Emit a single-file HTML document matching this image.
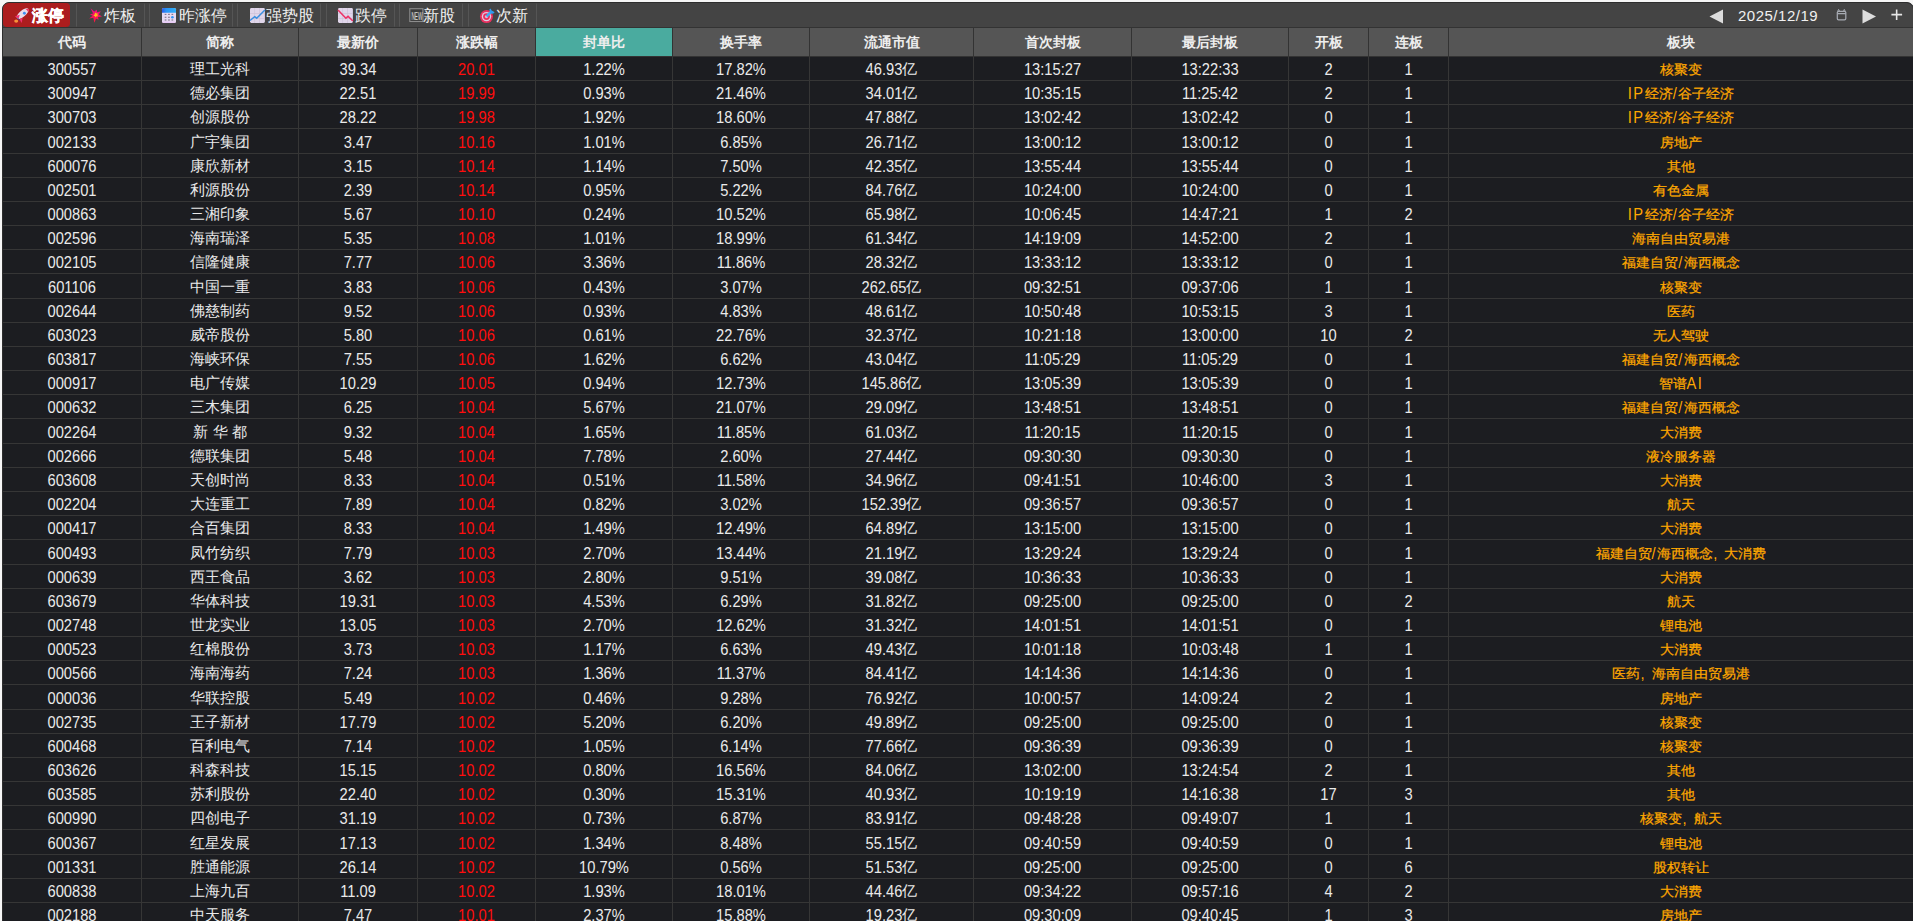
<!DOCTYPE html><html><head><meta charset="utf-8"><style>
*{box-sizing:border-box}
html,body{margin:0;padding:0;width:1913px;height:921px;overflow:hidden;background:#f6f6f6;font-family:"Liberation Sans",sans-serif}
#win{position:absolute;left:2px;top:2px;width:1912px;height:940px;border:1px solid #2e2e2e;border-radius:7px;background:#1c1d21;overflow:hidden}
#tb{position:absolute;left:0;top:0;width:1911px;height:25px;background:#444;border-bottom:1px solid #333}
.tab{position:absolute;top:0;height:24px;border-left:1px solid #555;border-right:1px solid #555;border-radius:1.5px;color:#f2f2f2;font-size:15px;line-height:24px;white-space:nowrap}
.tab.on{background:#ac1d1e;border-color:#ac1d1e;border-radius:4px;font-weight:bold;color:#fff}
.tab svg{position:absolute}
.tab .t{position:absolute;top:0}
#hd{position:absolute;left:0;top:25px;width:1911px;height:29px;background:#555;border-bottom:1px solid #333}
.h{position:absolute;top:0;height:28px;line-height:28px;text-align:center;color:#eee;font-weight:bold;font-size:14px}
.hv{position:absolute;top:25px;width:1px;height:29px;background:#333}
.dv{position:absolute;top:54px;width:1px;height:900px;background:#363636}
.dh{position:absolute;left:0;width:1911px;height:1px;background:#363636}
.r{position:absolute;left:0;width:1911px}
.d{position:absolute;top:0;text-align:center;color:#eaeaea;font-size:14.7px;white-space:nowrap}
.c{display:inline-block;white-space:pre;font-size:14.5px;transform:translateY(1px)}
.n{display:inline-block;white-space:pre;transform:translateY(1px) scaleY(1.08);transform-origin:50% 30%}
.red{color:#ff0d0d}
.org{color:#ffa800}
.org .n{letter-spacing:1.5px}
.org .c{font-size:14.25px;transform:translateY(1.5px) scaleY(0.93);-webkit-text-stroke:0.25px #ffa800}
#nav{position:absolute;top:0;height:24px;color:#eee}
</style></head><body><div id="win">
<div id="tb">
<div class="tab on" style="left:0px;width:67px"></div>
<div class="tab" style="left:73px;width:69px"></div>
<div class="tab" style="left:146px;width:84px"></div>
<div class="tab" style="left:234px;width:84px"></div>
<div class="tab" style="left:323px;width:69px"></div>
<div class="tab" style="left:396px;width:64px"></div>
<div class="tab" style="left:465px;width:69px"></div>
<div style="position:absolute;left:7px;top:2px;width:22px;height:21px"><svg width="22" height="21" viewBox="0 0 22 21"><ellipse cx="12.6" cy="8.6" rx="7.4" ry="3.1" transform="rotate(-40 12.6 8.6)" fill="#e9dbe9"/><path d="M15.6 3.9 L19 4 L18.4 7.5 C17.6 6 16.9 4.9 15.6 3.9Z" fill="#f23262"/><circle cx="14.4" cy="8.2" r="1.45" fill="#3f8ef2"/><path d="M4.8 11.3 L9.8 9.8 L8.6 13.6Z" fill="#f2306e"/><path d="M9.6 14.4 L12.6 12.6 L11.7 17.9Z" fill="#f2306e"/><path d="M7.6 12.4 L10.4 15.2 L9.6 15.8 L7 13.2Z" fill="#5a3a8a"/><ellipse cx="6.2" cy="16.1" rx="2" ry="1.7" fill="#f7923a"/></svg></div>
<div style="position:absolute;left:29px;top:1px;height:24px;line-height:24px;font-size:16px;color:#fff;font-weight:bold;-webkit-text-stroke:0.35px #fff">涨停</div>
<div style="position:absolute;left:83px;top:2px;width:22px;height:21px"><svg width="20" height="21" viewBox="0 0 20 21"><defs><linearGradient id="bg1" x1="0" y1="0" x2="0" y2="1"><stop offset="0" stop-color="#ee0a8c"/><stop offset="1" stop-color="#ff1a3c"/></linearGradient></defs><path d="M4.6 3.2 L8.2 6.6 L10.7 4.8 L11.2 7.3 L14.8 6.2 L12.8 9.6 L16 11.4 L11.9 12.3 L12.8 14.8 L10 13.7 L8.4 17.8 L7.3 12.8 L3.2 13.5 L6.6 10.7 L3.9 9.35 L7.1 8.4Z" fill="url(#bg1)"/><path d="M9.2 7.4 L10.6 8.6 L12 8.4 L11.3 10 L12.2 11.2 L10.5 11.3 L9.6 12.6 L8.9 11.2 L7.4 10.8 L8.5 9.6Z" fill="#ffbb1a"/></svg></div>
<div style="position:absolute;left:101px;top:1px;height:24px;line-height:24px;font-size:16px;color:#f0f0f0;">炸板</div>
<div style="position:absolute;left:155px;top:2px;width:22px;height:21px"><svg width="22" height="21" viewBox="0 0 22 21"><defs><linearGradient id="cg" x1="0" y1="0" x2="1" y2="0"><stop offset="0" stop-color="#2a5ae8"/><stop offset="0.3" stop-color="#2a94f5"/><stop offset="1" stop-color="#30b0f8"/></linearGradient></defs><rect x="4" y="3" width="14" height="15" rx="1.6" fill="#e6daf2"/><path d="M4 7.8 V4.6 a1.6 1.6 0 0 1 1.6 -1.6 h10.8 a1.6 1.6 0 0 1 1.6 1.6 V7.8Z" fill="url(#cg)"/><rect x="4.6" y="16.6" width="12.8" height="1.1" fill="#e8c4f8"/><g fill="#85798f"><rect x="6.7" y="8.8" width="1.7" height="1.2"/><rect x="10.1" y="8.8" width="1.7" height="1.2"/><rect x="13.5" y="8.8" width="1.7" height="1.2"/><rect x="6.7" y="11.7" width="1.7" height="1.2"/><rect x="10.1" y="11.7" width="1.7" height="1.2"/><rect x="6.7" y="14.4" width="1.7" height="1.2"/><rect x="10.1" y="14.4" width="1.7" height="1.2"/><rect x="13.5" y="14.4" width="1.7" height="1.2"/></g><circle cx="14.4" cy="12.3" r="1.3" fill="#2f95f5"/></svg></div>
<div style="position:absolute;left:176px;top:1px;height:24px;line-height:24px;font-size:16px;color:#f0f0f0;">昨涨停</div>
<div style="position:absolute;left:243px;top:2px;width:22px;height:21px"><svg width="22" height="21" viewBox="0 0 22 21"><rect x="4" y="3" width="14.9" height="15" rx="1.4" fill="#e0d6ea"/><path d="M8.6 3v15M13.5 3v15M4 8.5h14.9M4 13.5h14.9" stroke="#cbbfd6" stroke-width="0.6"/><path d="M4 15.5 L8.7 11.6 L10.7 13.2 L18.9 5" stroke="#3a8fe0" stroke-width="1.5" fill="none"/></svg></div>
<div style="position:absolute;left:263px;top:1px;height:24px;line-height:24px;font-size:16px;color:#f0f0f0;">强势股</div>
<div style="position:absolute;left:331px;top:2px;width:22px;height:21px"><svg width="22" height="21" viewBox="0 0 22 21"><rect x="4" y="3" width="14.9" height="15" rx="1.4" fill="#e0d6ea"/><path d="M8.6 3v15M13.5 3v15M4 8.5h14.9M4 13.5h14.9" stroke="#cbbfd6" stroke-width="0.6"/><path d="M4 5 L11.9 13.2 L14.1 11.4 L18.9 16" stroke="#ec3468" stroke-width="1.6" fill="none"/></svg></div>
<div style="position:absolute;left:352px;top:1px;height:24px;line-height:24px;font-size:16px;color:#f0f0f0;">跌停</div>
<div style="position:absolute;left:401px;top:2px;width:22px;height:21px"><svg width="22" height="21" viewBox="0 0 22 21"><rect x="5.8" y="3.7" width="13.1" height="12.8" fill="#3c3c3c" stroke="#8c8c8c" stroke-width="1.1"/><text x="12.85" y="14.9" font-size="11.8" font-family="Liberation Sans" text-anchor="middle" fill="#e0e0e0" textLength="10.9" lengthAdjust="spacingAndGlyphs">NEW</text></svg></div>
<div style="position:absolute;left:420px;top:1px;height:24px;line-height:24px;font-size:16px;color:#f0f0f0;">新股</div>
<div style="position:absolute;left:473px;top:2px;width:22px;height:21px"><svg width="22" height="21" viewBox="0 0 22 21"><circle cx="10.5" cy="11.6" r="6.5" fill="#e8305e"/><circle cx="10.5" cy="11.6" r="4.7" fill="#dccbe2"/><circle cx="10.5" cy="11.6" r="3.4" fill="#e8305e"/><circle cx="10.5" cy="11.6" r="1.6" fill="#d4c0dc"/><path d="M10.6 11.4 L15.2 6.6" stroke="#3aaaf2" stroke-width="2.4"/><path d="M13.2 4.8 L14.6 3.4 L15.6 5.4 L17.6 6.4 L18.6 7.8 L16.6 8.8 L14.8 8.6 Z" fill="#2f9af0"/></svg></div>
<div style="position:absolute;left:493px;top:1px;height:24px;line-height:24px;font-size:16px;color:#f0f0f0;">次新</div>
<svg style="position:absolute;left:1706px;top:6px" width="15" height="15" viewBox="0 0 15 15"><path d="M0.5 7.5 L14 0.5 V14.5Z" fill="#ddd"/></svg>
<div style="position:absolute;left:1735px;top:1px;height:24px;line-height:24px;font-size:15px;letter-spacing:0.5px;color:#f0f0f0">2025/12/19</div>
<svg style="position:absolute;left:1829px;top:2px" width="20" height="20" viewBox="0 0 20 20"><rect x="5.3" y="6.3" width="8.5" height="8.6" rx="1.3" fill="none" stroke="#a6aab2" stroke-width="1.25"/><path d="M5.3 8.6 H13.8" stroke="#a6aab2" stroke-width="1.2"/><path d="M5.6 6.4 L6.6 4.4 L7.6 6.4 M11.4 6.4 L12.3 4.4 L13.3 6.4" fill="none" stroke="#a6aab2" stroke-width="1"/></svg>
<svg style="position:absolute;left:1859px;top:6px" width="15" height="15" viewBox="0 0 15 15"><path d="M0.5 0.5 L14 7.5 L0.5 14.5Z" fill="#ddd"/></svg>
<svg style="position:absolute;left:1883px;top:2px" width="20" height="20" viewBox="0 0 20 20"><path d="M10.65 4.4 V15 M5.4 9.67 H16.1" stroke="#e6e6e6" stroke-width="1.6"/></svg>
</div>
<div id="hd">
<div class="h" style="left:0px;width:138px;">代码</div>
<div class="h" style="left:139px;width:156px;">简称</div>
<div class="h" style="left:296px;width:118px;">最新价</div>
<div class="h" style="left:415px;width:117px;">涨跌幅</div>
<div class="h" style="left:533px;width:136px;background:#4aab9f;">封单比</div>
<div class="h" style="left:670px;width:136px;">换手率</div>
<div class="h" style="left:807px;width:163px;">流通市值</div>
<div class="h" style="left:971px;width:157px;">首次封板</div>
<div class="h" style="left:1129px;width:156px;">最后封板</div>
<div class="h" style="left:1286px;width:79px;">开板</div>
<div class="h" style="left:1366px;width:79px;">连板</div>
<div class="h" style="left:1446px;width:464px;">板块</div>
</div>
<div class="hv" style="left:138px"></div>
<div class="dv" style="left:138px"></div>
<div class="hv" style="left:295px"></div>
<div class="dv" style="left:295px"></div>
<div class="hv" style="left:414px"></div>
<div class="dv" style="left:414px"></div>
<div class="hv" style="left:532px"></div>
<div class="dv" style="left:532px"></div>
<div class="hv" style="left:669px"></div>
<div class="dv" style="left:669px"></div>
<div class="hv" style="left:806px"></div>
<div class="dv" style="left:806px"></div>
<div class="hv" style="left:970px"></div>
<div class="dv" style="left:970px"></div>
<div class="hv" style="left:1128px"></div>
<div class="dv" style="left:1128px"></div>
<div class="hv" style="left:1285px"></div>
<div class="dv" style="left:1285px"></div>
<div class="hv" style="left:1365px"></div>
<div class="dv" style="left:1365px"></div>
<div class="hv" style="left:1445px"></div>
<div class="dv" style="left:1445px"></div>
<div class="dh" style="top:77px"></div>
<div class="dh" style="top:101px"></div>
<div class="dh" style="top:125px"></div>
<div class="dh" style="top:150px"></div>
<div class="dh" style="top:174px"></div>
<div class="dh" style="top:198px"></div>
<div class="dh" style="top:222px"></div>
<div class="dh" style="top:246px"></div>
<div class="dh" style="top:270px"></div>
<div class="dh" style="top:295px"></div>
<div class="dh" style="top:319px"></div>
<div class="dh" style="top:343px"></div>
<div class="dh" style="top:367px"></div>
<div class="dh" style="top:391px"></div>
<div class="dh" style="top:415px"></div>
<div class="dh" style="top:440px"></div>
<div class="dh" style="top:464px"></div>
<div class="dh" style="top:488px"></div>
<div class="dh" style="top:512px"></div>
<div class="dh" style="top:536px"></div>
<div class="dh" style="top:561px"></div>
<div class="dh" style="top:585px"></div>
<div class="dh" style="top:609px"></div>
<div class="dh" style="top:633px"></div>
<div class="dh" style="top:657px"></div>
<div class="dh" style="top:681px"></div>
<div class="dh" style="top:706px"></div>
<div class="dh" style="top:730px"></div>
<div class="dh" style="top:754px"></div>
<div class="dh" style="top:778px"></div>
<div class="dh" style="top:802px"></div>
<div class="dh" style="top:826px"></div>
<div class="dh" style="top:851px"></div>
<div class="dh" style="top:875px"></div>
<div class="dh" style="top:899px"></div>
<div class="dh" style="top:923px"></div>
<div class="r" style="top:54px;height:23px">
<div class="d" style="left:0px;width:138px;height:23px;line-height:23px"><span class="n">300557</span></div>
<div class="d" style="left:139px;width:156px;height:23px;line-height:23px"><span class="c">理工光科</span></div>
<div class="d" style="left:296px;width:118px;height:23px;line-height:23px"><span class="n">39.34</span></div>
<div class="d red" style="left:415px;width:117px;height:23px;line-height:23px"><span class="n">20.01</span></div>
<div class="d" style="left:533px;width:136px;height:23px;line-height:23px"><span class="n">1.22%</span></div>
<div class="d" style="left:670px;width:136px;height:23px;line-height:23px"><span class="n">17.82%</span></div>
<div class="d" style="left:807px;width:163px;height:23px;line-height:23px"><span class="n">46.93</span><span class="c">亿</span></div>
<div class="d" style="left:971px;width:157px;height:23px;line-height:23px"><span class="n">13:15:27</span></div>
<div class="d" style="left:1129px;width:156px;height:23px;line-height:23px"><span class="n">13:22:33</span></div>
<div class="d" style="left:1286px;width:79px;height:23px;line-height:23px"><span class="n">2</span></div>
<div class="d" style="left:1366px;width:79px;height:23px;line-height:23px"><span class="n">1</span></div>
<div class="d org" style="left:1446px;width:464px;height:23px;line-height:23px"><span class="c">核聚变</span></div>
</div>
<div class="r" style="top:78px;height:23px">
<div class="d" style="left:0px;width:138px;height:23px;line-height:23px"><span class="n">300947</span></div>
<div class="d" style="left:139px;width:156px;height:23px;line-height:23px"><span class="c">德必集团</span></div>
<div class="d" style="left:296px;width:118px;height:23px;line-height:23px"><span class="n">22.51</span></div>
<div class="d red" style="left:415px;width:117px;height:23px;line-height:23px"><span class="n">19.99</span></div>
<div class="d" style="left:533px;width:136px;height:23px;line-height:23px"><span class="n">0.93%</span></div>
<div class="d" style="left:670px;width:136px;height:23px;line-height:23px"><span class="n">21.46%</span></div>
<div class="d" style="left:807px;width:163px;height:23px;line-height:23px"><span class="n">34.01</span><span class="c">亿</span></div>
<div class="d" style="left:971px;width:157px;height:23px;line-height:23px"><span class="n">10:35:15</span></div>
<div class="d" style="left:1129px;width:156px;height:23px;line-height:23px"><span class="n">11:25:42</span></div>
<div class="d" style="left:1286px;width:79px;height:23px;line-height:23px"><span class="n">2</span></div>
<div class="d" style="left:1366px;width:79px;height:23px;line-height:23px"><span class="n">1</span></div>
<div class="d org" style="left:1446px;width:464px;height:23px;line-height:23px"><span class="n">IP</span><span class="c">经济</span><span class="n">/</span><span class="c">谷子经济</span></div>
</div>
<div class="r" style="top:102px;height:23px">
<div class="d" style="left:0px;width:138px;height:23px;line-height:23px"><span class="n">300703</span></div>
<div class="d" style="left:139px;width:156px;height:23px;line-height:23px"><span class="c">创源股份</span></div>
<div class="d" style="left:296px;width:118px;height:23px;line-height:23px"><span class="n">28.22</span></div>
<div class="d red" style="left:415px;width:117px;height:23px;line-height:23px"><span class="n">19.98</span></div>
<div class="d" style="left:533px;width:136px;height:23px;line-height:23px"><span class="n">1.92%</span></div>
<div class="d" style="left:670px;width:136px;height:23px;line-height:23px"><span class="n">18.60%</span></div>
<div class="d" style="left:807px;width:163px;height:23px;line-height:23px"><span class="n">47.88</span><span class="c">亿</span></div>
<div class="d" style="left:971px;width:157px;height:23px;line-height:23px"><span class="n">13:02:42</span></div>
<div class="d" style="left:1129px;width:156px;height:23px;line-height:23px"><span class="n">13:02:42</span></div>
<div class="d" style="left:1286px;width:79px;height:23px;line-height:23px"><span class="n">0</span></div>
<div class="d" style="left:1366px;width:79px;height:23px;line-height:23px"><span class="n">1</span></div>
<div class="d org" style="left:1446px;width:464px;height:23px;line-height:23px"><span class="n">IP</span><span class="c">经济</span><span class="n">/</span><span class="c">谷子经济</span></div>
</div>
<div class="r" style="top:126px;height:24px">
<div class="d" style="left:0px;width:138px;height:24px;line-height:24px"><span class="n">002133</span></div>
<div class="d" style="left:139px;width:156px;height:24px;line-height:24px"><span class="c">广宇集团</span></div>
<div class="d" style="left:296px;width:118px;height:24px;line-height:24px"><span class="n">3.47</span></div>
<div class="d red" style="left:415px;width:117px;height:24px;line-height:24px"><span class="n">10.16</span></div>
<div class="d" style="left:533px;width:136px;height:24px;line-height:24px"><span class="n">1.01%</span></div>
<div class="d" style="left:670px;width:136px;height:24px;line-height:24px"><span class="n">6.85%</span></div>
<div class="d" style="left:807px;width:163px;height:24px;line-height:24px"><span class="n">26.71</span><span class="c">亿</span></div>
<div class="d" style="left:971px;width:157px;height:24px;line-height:24px"><span class="n">13:00:12</span></div>
<div class="d" style="left:1129px;width:156px;height:24px;line-height:24px"><span class="n">13:00:12</span></div>
<div class="d" style="left:1286px;width:79px;height:24px;line-height:24px"><span class="n">0</span></div>
<div class="d" style="left:1366px;width:79px;height:24px;line-height:24px"><span class="n">1</span></div>
<div class="d org" style="left:1446px;width:464px;height:24px;line-height:24px"><span class="c">房地产</span></div>
</div>
<div class="r" style="top:151px;height:23px">
<div class="d" style="left:0px;width:138px;height:23px;line-height:23px"><span class="n">600076</span></div>
<div class="d" style="left:139px;width:156px;height:23px;line-height:23px"><span class="c">康欣新材</span></div>
<div class="d" style="left:296px;width:118px;height:23px;line-height:23px"><span class="n">3.15</span></div>
<div class="d red" style="left:415px;width:117px;height:23px;line-height:23px"><span class="n">10.14</span></div>
<div class="d" style="left:533px;width:136px;height:23px;line-height:23px"><span class="n">1.14%</span></div>
<div class="d" style="left:670px;width:136px;height:23px;line-height:23px"><span class="n">7.50%</span></div>
<div class="d" style="left:807px;width:163px;height:23px;line-height:23px"><span class="n">42.35</span><span class="c">亿</span></div>
<div class="d" style="left:971px;width:157px;height:23px;line-height:23px"><span class="n">13:55:44</span></div>
<div class="d" style="left:1129px;width:156px;height:23px;line-height:23px"><span class="n">13:55:44</span></div>
<div class="d" style="left:1286px;width:79px;height:23px;line-height:23px"><span class="n">0</span></div>
<div class="d" style="left:1366px;width:79px;height:23px;line-height:23px"><span class="n">1</span></div>
<div class="d org" style="left:1446px;width:464px;height:23px;line-height:23px"><span class="c">其他</span></div>
</div>
<div class="r" style="top:175px;height:23px">
<div class="d" style="left:0px;width:138px;height:23px;line-height:23px"><span class="n">002501</span></div>
<div class="d" style="left:139px;width:156px;height:23px;line-height:23px"><span class="c">利源股份</span></div>
<div class="d" style="left:296px;width:118px;height:23px;line-height:23px"><span class="n">2.39</span></div>
<div class="d red" style="left:415px;width:117px;height:23px;line-height:23px"><span class="n">10.14</span></div>
<div class="d" style="left:533px;width:136px;height:23px;line-height:23px"><span class="n">0.95%</span></div>
<div class="d" style="left:670px;width:136px;height:23px;line-height:23px"><span class="n">5.22%</span></div>
<div class="d" style="left:807px;width:163px;height:23px;line-height:23px"><span class="n">84.76</span><span class="c">亿</span></div>
<div class="d" style="left:971px;width:157px;height:23px;line-height:23px"><span class="n">10:24:00</span></div>
<div class="d" style="left:1129px;width:156px;height:23px;line-height:23px"><span class="n">10:24:00</span></div>
<div class="d" style="left:1286px;width:79px;height:23px;line-height:23px"><span class="n">0</span></div>
<div class="d" style="left:1366px;width:79px;height:23px;line-height:23px"><span class="n">1</span></div>
<div class="d org" style="left:1446px;width:464px;height:23px;line-height:23px"><span class="c">有色金属</span></div>
</div>
<div class="r" style="top:199px;height:23px">
<div class="d" style="left:0px;width:138px;height:23px;line-height:23px"><span class="n">000863</span></div>
<div class="d" style="left:139px;width:156px;height:23px;line-height:23px"><span class="c">三湘印象</span></div>
<div class="d" style="left:296px;width:118px;height:23px;line-height:23px"><span class="n">5.67</span></div>
<div class="d red" style="left:415px;width:117px;height:23px;line-height:23px"><span class="n">10.10</span></div>
<div class="d" style="left:533px;width:136px;height:23px;line-height:23px"><span class="n">0.24%</span></div>
<div class="d" style="left:670px;width:136px;height:23px;line-height:23px"><span class="n">10.52%</span></div>
<div class="d" style="left:807px;width:163px;height:23px;line-height:23px"><span class="n">65.98</span><span class="c">亿</span></div>
<div class="d" style="left:971px;width:157px;height:23px;line-height:23px"><span class="n">10:06:45</span></div>
<div class="d" style="left:1129px;width:156px;height:23px;line-height:23px"><span class="n">14:47:21</span></div>
<div class="d" style="left:1286px;width:79px;height:23px;line-height:23px"><span class="n">1</span></div>
<div class="d" style="left:1366px;width:79px;height:23px;line-height:23px"><span class="n">2</span></div>
<div class="d org" style="left:1446px;width:464px;height:23px;line-height:23px"><span class="n">IP</span><span class="c">经济</span><span class="n">/</span><span class="c">谷子经济</span></div>
</div>
<div class="r" style="top:223px;height:23px">
<div class="d" style="left:0px;width:138px;height:23px;line-height:23px"><span class="n">002596</span></div>
<div class="d" style="left:139px;width:156px;height:23px;line-height:23px"><span class="c">海南瑞泽</span></div>
<div class="d" style="left:296px;width:118px;height:23px;line-height:23px"><span class="n">5.35</span></div>
<div class="d red" style="left:415px;width:117px;height:23px;line-height:23px"><span class="n">10.08</span></div>
<div class="d" style="left:533px;width:136px;height:23px;line-height:23px"><span class="n">1.01%</span></div>
<div class="d" style="left:670px;width:136px;height:23px;line-height:23px"><span class="n">18.99%</span></div>
<div class="d" style="left:807px;width:163px;height:23px;line-height:23px"><span class="n">61.34</span><span class="c">亿</span></div>
<div class="d" style="left:971px;width:157px;height:23px;line-height:23px"><span class="n">14:19:09</span></div>
<div class="d" style="left:1129px;width:156px;height:23px;line-height:23px"><span class="n">14:52:00</span></div>
<div class="d" style="left:1286px;width:79px;height:23px;line-height:23px"><span class="n">2</span></div>
<div class="d" style="left:1366px;width:79px;height:23px;line-height:23px"><span class="n">1</span></div>
<div class="d org" style="left:1446px;width:464px;height:23px;line-height:23px"><span class="c">海南自由贸易港</span></div>
</div>
<div class="r" style="top:247px;height:23px">
<div class="d" style="left:0px;width:138px;height:23px;line-height:23px"><span class="n">002105</span></div>
<div class="d" style="left:139px;width:156px;height:23px;line-height:23px"><span class="c">信隆健康</span></div>
<div class="d" style="left:296px;width:118px;height:23px;line-height:23px"><span class="n">7.77</span></div>
<div class="d red" style="left:415px;width:117px;height:23px;line-height:23px"><span class="n">10.06</span></div>
<div class="d" style="left:533px;width:136px;height:23px;line-height:23px"><span class="n">3.36%</span></div>
<div class="d" style="left:670px;width:136px;height:23px;line-height:23px"><span class="n">11.86%</span></div>
<div class="d" style="left:807px;width:163px;height:23px;line-height:23px"><span class="n">28.32</span><span class="c">亿</span></div>
<div class="d" style="left:971px;width:157px;height:23px;line-height:23px"><span class="n">13:33:12</span></div>
<div class="d" style="left:1129px;width:156px;height:23px;line-height:23px"><span class="n">13:33:12</span></div>
<div class="d" style="left:1286px;width:79px;height:23px;line-height:23px"><span class="n">0</span></div>
<div class="d" style="left:1366px;width:79px;height:23px;line-height:23px"><span class="n">1</span></div>
<div class="d org" style="left:1446px;width:464px;height:23px;line-height:23px"><span class="c">福建自贸</span><span class="n">/</span><span class="c">海西概念</span></div>
</div>
<div class="r" style="top:271px;height:24px">
<div class="d" style="left:0px;width:138px;height:24px;line-height:24px"><span class="n">601106</span></div>
<div class="d" style="left:139px;width:156px;height:24px;line-height:24px"><span class="c">中国一重</span></div>
<div class="d" style="left:296px;width:118px;height:24px;line-height:24px"><span class="n">3.83</span></div>
<div class="d red" style="left:415px;width:117px;height:24px;line-height:24px"><span class="n">10.06</span></div>
<div class="d" style="left:533px;width:136px;height:24px;line-height:24px"><span class="n">0.43%</span></div>
<div class="d" style="left:670px;width:136px;height:24px;line-height:24px"><span class="n">3.07%</span></div>
<div class="d" style="left:807px;width:163px;height:24px;line-height:24px"><span class="n">262.65</span><span class="c">亿</span></div>
<div class="d" style="left:971px;width:157px;height:24px;line-height:24px"><span class="n">09:32:51</span></div>
<div class="d" style="left:1129px;width:156px;height:24px;line-height:24px"><span class="n">09:37:06</span></div>
<div class="d" style="left:1286px;width:79px;height:24px;line-height:24px"><span class="n">1</span></div>
<div class="d" style="left:1366px;width:79px;height:24px;line-height:24px"><span class="n">1</span></div>
<div class="d org" style="left:1446px;width:464px;height:24px;line-height:24px"><span class="c">核聚变</span></div>
</div>
<div class="r" style="top:296px;height:23px">
<div class="d" style="left:0px;width:138px;height:23px;line-height:23px"><span class="n">002644</span></div>
<div class="d" style="left:139px;width:156px;height:23px;line-height:23px"><span class="c">佛慈制药</span></div>
<div class="d" style="left:296px;width:118px;height:23px;line-height:23px"><span class="n">9.52</span></div>
<div class="d red" style="left:415px;width:117px;height:23px;line-height:23px"><span class="n">10.06</span></div>
<div class="d" style="left:533px;width:136px;height:23px;line-height:23px"><span class="n">0.93%</span></div>
<div class="d" style="left:670px;width:136px;height:23px;line-height:23px"><span class="n">4.83%</span></div>
<div class="d" style="left:807px;width:163px;height:23px;line-height:23px"><span class="n">48.61</span><span class="c">亿</span></div>
<div class="d" style="left:971px;width:157px;height:23px;line-height:23px"><span class="n">10:50:48</span></div>
<div class="d" style="left:1129px;width:156px;height:23px;line-height:23px"><span class="n">10:53:15</span></div>
<div class="d" style="left:1286px;width:79px;height:23px;line-height:23px"><span class="n">3</span></div>
<div class="d" style="left:1366px;width:79px;height:23px;line-height:23px"><span class="n">1</span></div>
<div class="d org" style="left:1446px;width:464px;height:23px;line-height:23px"><span class="c">医药</span></div>
</div>
<div class="r" style="top:320px;height:23px">
<div class="d" style="left:0px;width:138px;height:23px;line-height:23px"><span class="n">603023</span></div>
<div class="d" style="left:139px;width:156px;height:23px;line-height:23px"><span class="c">威帝股份</span></div>
<div class="d" style="left:296px;width:118px;height:23px;line-height:23px"><span class="n">5.80</span></div>
<div class="d red" style="left:415px;width:117px;height:23px;line-height:23px"><span class="n">10.06</span></div>
<div class="d" style="left:533px;width:136px;height:23px;line-height:23px"><span class="n">0.61%</span></div>
<div class="d" style="left:670px;width:136px;height:23px;line-height:23px"><span class="n">22.76%</span></div>
<div class="d" style="left:807px;width:163px;height:23px;line-height:23px"><span class="n">32.37</span><span class="c">亿</span></div>
<div class="d" style="left:971px;width:157px;height:23px;line-height:23px"><span class="n">10:21:18</span></div>
<div class="d" style="left:1129px;width:156px;height:23px;line-height:23px"><span class="n">13:00:00</span></div>
<div class="d" style="left:1286px;width:79px;height:23px;line-height:23px"><span class="n">10</span></div>
<div class="d" style="left:1366px;width:79px;height:23px;line-height:23px"><span class="n">2</span></div>
<div class="d org" style="left:1446px;width:464px;height:23px;line-height:23px"><span class="c">无人驾驶</span></div>
</div>
<div class="r" style="top:344px;height:23px">
<div class="d" style="left:0px;width:138px;height:23px;line-height:23px"><span class="n">603817</span></div>
<div class="d" style="left:139px;width:156px;height:23px;line-height:23px"><span class="c">海峡环保</span></div>
<div class="d" style="left:296px;width:118px;height:23px;line-height:23px"><span class="n">7.55</span></div>
<div class="d red" style="left:415px;width:117px;height:23px;line-height:23px"><span class="n">10.06</span></div>
<div class="d" style="left:533px;width:136px;height:23px;line-height:23px"><span class="n">1.62%</span></div>
<div class="d" style="left:670px;width:136px;height:23px;line-height:23px"><span class="n">6.62%</span></div>
<div class="d" style="left:807px;width:163px;height:23px;line-height:23px"><span class="n">43.04</span><span class="c">亿</span></div>
<div class="d" style="left:971px;width:157px;height:23px;line-height:23px"><span class="n">11:05:29</span></div>
<div class="d" style="left:1129px;width:156px;height:23px;line-height:23px"><span class="n">11:05:29</span></div>
<div class="d" style="left:1286px;width:79px;height:23px;line-height:23px"><span class="n">0</span></div>
<div class="d" style="left:1366px;width:79px;height:23px;line-height:23px"><span class="n">1</span></div>
<div class="d org" style="left:1446px;width:464px;height:23px;line-height:23px"><span class="c">福建自贸</span><span class="n">/</span><span class="c">海西概念</span></div>
</div>
<div class="r" style="top:368px;height:23px">
<div class="d" style="left:0px;width:138px;height:23px;line-height:23px"><span class="n">000917</span></div>
<div class="d" style="left:139px;width:156px;height:23px;line-height:23px"><span class="c">电广传媒</span></div>
<div class="d" style="left:296px;width:118px;height:23px;line-height:23px"><span class="n">10.29</span></div>
<div class="d red" style="left:415px;width:117px;height:23px;line-height:23px"><span class="n">10.05</span></div>
<div class="d" style="left:533px;width:136px;height:23px;line-height:23px"><span class="n">0.94%</span></div>
<div class="d" style="left:670px;width:136px;height:23px;line-height:23px"><span class="n">12.73%</span></div>
<div class="d" style="left:807px;width:163px;height:23px;line-height:23px"><span class="n">145.86</span><span class="c">亿</span></div>
<div class="d" style="left:971px;width:157px;height:23px;line-height:23px"><span class="n">13:05:39</span></div>
<div class="d" style="left:1129px;width:156px;height:23px;line-height:23px"><span class="n">13:05:39</span></div>
<div class="d" style="left:1286px;width:79px;height:23px;line-height:23px"><span class="n">0</span></div>
<div class="d" style="left:1366px;width:79px;height:23px;line-height:23px"><span class="n">1</span></div>
<div class="d org" style="left:1446px;width:464px;height:23px;line-height:23px"><span class="c">智谱</span><span class="n">AI</span></div>
</div>
<div class="r" style="top:392px;height:23px">
<div class="d" style="left:0px;width:138px;height:23px;line-height:23px"><span class="n">000632</span></div>
<div class="d" style="left:139px;width:156px;height:23px;line-height:23px"><span class="c">三木集团</span></div>
<div class="d" style="left:296px;width:118px;height:23px;line-height:23px"><span class="n">6.25</span></div>
<div class="d red" style="left:415px;width:117px;height:23px;line-height:23px"><span class="n">10.04</span></div>
<div class="d" style="left:533px;width:136px;height:23px;line-height:23px"><span class="n">5.67%</span></div>
<div class="d" style="left:670px;width:136px;height:23px;line-height:23px"><span class="n">21.07%</span></div>
<div class="d" style="left:807px;width:163px;height:23px;line-height:23px"><span class="n">29.09</span><span class="c">亿</span></div>
<div class="d" style="left:971px;width:157px;height:23px;line-height:23px"><span class="n">13:48:51</span></div>
<div class="d" style="left:1129px;width:156px;height:23px;line-height:23px"><span class="n">13:48:51</span></div>
<div class="d" style="left:1286px;width:79px;height:23px;line-height:23px"><span class="n">0</span></div>
<div class="d" style="left:1366px;width:79px;height:23px;line-height:23px"><span class="n">1</span></div>
<div class="d org" style="left:1446px;width:464px;height:23px;line-height:23px"><span class="c">福建自贸</span><span class="n">/</span><span class="c">海西概念</span></div>
</div>
<div class="r" style="top:416px;height:24px">
<div class="d" style="left:0px;width:138px;height:24px;line-height:24px"><span class="n">002264</span></div>
<div class="d" style="left:139px;width:156px;height:24px;line-height:24px"><span class="c">新</span><span class="n"> </span><span class="c">华</span><span class="n"> </span><span class="c">都</span></div>
<div class="d" style="left:296px;width:118px;height:24px;line-height:24px"><span class="n">9.32</span></div>
<div class="d red" style="left:415px;width:117px;height:24px;line-height:24px"><span class="n">10.04</span></div>
<div class="d" style="left:533px;width:136px;height:24px;line-height:24px"><span class="n">1.65%</span></div>
<div class="d" style="left:670px;width:136px;height:24px;line-height:24px"><span class="n">11.85%</span></div>
<div class="d" style="left:807px;width:163px;height:24px;line-height:24px"><span class="n">61.03</span><span class="c">亿</span></div>
<div class="d" style="left:971px;width:157px;height:24px;line-height:24px"><span class="n">11:20:15</span></div>
<div class="d" style="left:1129px;width:156px;height:24px;line-height:24px"><span class="n">11:20:15</span></div>
<div class="d" style="left:1286px;width:79px;height:24px;line-height:24px"><span class="n">0</span></div>
<div class="d" style="left:1366px;width:79px;height:24px;line-height:24px"><span class="n">1</span></div>
<div class="d org" style="left:1446px;width:464px;height:24px;line-height:24px"><span class="c">大消费</span></div>
</div>
<div class="r" style="top:441px;height:23px">
<div class="d" style="left:0px;width:138px;height:23px;line-height:23px"><span class="n">002666</span></div>
<div class="d" style="left:139px;width:156px;height:23px;line-height:23px"><span class="c">德联集团</span></div>
<div class="d" style="left:296px;width:118px;height:23px;line-height:23px"><span class="n">5.48</span></div>
<div class="d red" style="left:415px;width:117px;height:23px;line-height:23px"><span class="n">10.04</span></div>
<div class="d" style="left:533px;width:136px;height:23px;line-height:23px"><span class="n">7.78%</span></div>
<div class="d" style="left:670px;width:136px;height:23px;line-height:23px"><span class="n">2.60%</span></div>
<div class="d" style="left:807px;width:163px;height:23px;line-height:23px"><span class="n">27.44</span><span class="c">亿</span></div>
<div class="d" style="left:971px;width:157px;height:23px;line-height:23px"><span class="n">09:30:30</span></div>
<div class="d" style="left:1129px;width:156px;height:23px;line-height:23px"><span class="n">09:30:30</span></div>
<div class="d" style="left:1286px;width:79px;height:23px;line-height:23px"><span class="n">0</span></div>
<div class="d" style="left:1366px;width:79px;height:23px;line-height:23px"><span class="n">1</span></div>
<div class="d org" style="left:1446px;width:464px;height:23px;line-height:23px"><span class="c">液冷服务器</span></div>
</div>
<div class="r" style="top:465px;height:23px">
<div class="d" style="left:0px;width:138px;height:23px;line-height:23px"><span class="n">603608</span></div>
<div class="d" style="left:139px;width:156px;height:23px;line-height:23px"><span class="c">天创时尚</span></div>
<div class="d" style="left:296px;width:118px;height:23px;line-height:23px"><span class="n">8.33</span></div>
<div class="d red" style="left:415px;width:117px;height:23px;line-height:23px"><span class="n">10.04</span></div>
<div class="d" style="left:533px;width:136px;height:23px;line-height:23px"><span class="n">0.51%</span></div>
<div class="d" style="left:670px;width:136px;height:23px;line-height:23px"><span class="n">11.58%</span></div>
<div class="d" style="left:807px;width:163px;height:23px;line-height:23px"><span class="n">34.96</span><span class="c">亿</span></div>
<div class="d" style="left:971px;width:157px;height:23px;line-height:23px"><span class="n">09:41:51</span></div>
<div class="d" style="left:1129px;width:156px;height:23px;line-height:23px"><span class="n">10:46:00</span></div>
<div class="d" style="left:1286px;width:79px;height:23px;line-height:23px"><span class="n">3</span></div>
<div class="d" style="left:1366px;width:79px;height:23px;line-height:23px"><span class="n">1</span></div>
<div class="d org" style="left:1446px;width:464px;height:23px;line-height:23px"><span class="c">大消费</span></div>
</div>
<div class="r" style="top:489px;height:23px">
<div class="d" style="left:0px;width:138px;height:23px;line-height:23px"><span class="n">002204</span></div>
<div class="d" style="left:139px;width:156px;height:23px;line-height:23px"><span class="c">大连重工</span></div>
<div class="d" style="left:296px;width:118px;height:23px;line-height:23px"><span class="n">7.89</span></div>
<div class="d red" style="left:415px;width:117px;height:23px;line-height:23px"><span class="n">10.04</span></div>
<div class="d" style="left:533px;width:136px;height:23px;line-height:23px"><span class="n">0.82%</span></div>
<div class="d" style="left:670px;width:136px;height:23px;line-height:23px"><span class="n">3.02%</span></div>
<div class="d" style="left:807px;width:163px;height:23px;line-height:23px"><span class="n">152.39</span><span class="c">亿</span></div>
<div class="d" style="left:971px;width:157px;height:23px;line-height:23px"><span class="n">09:36:57</span></div>
<div class="d" style="left:1129px;width:156px;height:23px;line-height:23px"><span class="n">09:36:57</span></div>
<div class="d" style="left:1286px;width:79px;height:23px;line-height:23px"><span class="n">0</span></div>
<div class="d" style="left:1366px;width:79px;height:23px;line-height:23px"><span class="n">1</span></div>
<div class="d org" style="left:1446px;width:464px;height:23px;line-height:23px"><span class="c">航天</span></div>
</div>
<div class="r" style="top:513px;height:23px">
<div class="d" style="left:0px;width:138px;height:23px;line-height:23px"><span class="n">000417</span></div>
<div class="d" style="left:139px;width:156px;height:23px;line-height:23px"><span class="c">合百集团</span></div>
<div class="d" style="left:296px;width:118px;height:23px;line-height:23px"><span class="n">8.33</span></div>
<div class="d red" style="left:415px;width:117px;height:23px;line-height:23px"><span class="n">10.04</span></div>
<div class="d" style="left:533px;width:136px;height:23px;line-height:23px"><span class="n">1.49%</span></div>
<div class="d" style="left:670px;width:136px;height:23px;line-height:23px"><span class="n">12.49%</span></div>
<div class="d" style="left:807px;width:163px;height:23px;line-height:23px"><span class="n">64.89</span><span class="c">亿</span></div>
<div class="d" style="left:971px;width:157px;height:23px;line-height:23px"><span class="n">13:15:00</span></div>
<div class="d" style="left:1129px;width:156px;height:23px;line-height:23px"><span class="n">13:15:00</span></div>
<div class="d" style="left:1286px;width:79px;height:23px;line-height:23px"><span class="n">0</span></div>
<div class="d" style="left:1366px;width:79px;height:23px;line-height:23px"><span class="n">1</span></div>
<div class="d org" style="left:1446px;width:464px;height:23px;line-height:23px"><span class="c">大消费</span></div>
</div>
<div class="r" style="top:537px;height:24px">
<div class="d" style="left:0px;width:138px;height:24px;line-height:24px"><span class="n">600493</span></div>
<div class="d" style="left:139px;width:156px;height:24px;line-height:24px"><span class="c">凤竹纺织</span></div>
<div class="d" style="left:296px;width:118px;height:24px;line-height:24px"><span class="n">7.79</span></div>
<div class="d red" style="left:415px;width:117px;height:24px;line-height:24px"><span class="n">10.03</span></div>
<div class="d" style="left:533px;width:136px;height:24px;line-height:24px"><span class="n">2.70%</span></div>
<div class="d" style="left:670px;width:136px;height:24px;line-height:24px"><span class="n">13.44%</span></div>
<div class="d" style="left:807px;width:163px;height:24px;line-height:24px"><span class="n">21.19</span><span class="c">亿</span></div>
<div class="d" style="left:971px;width:157px;height:24px;line-height:24px"><span class="n">13:29:24</span></div>
<div class="d" style="left:1129px;width:156px;height:24px;line-height:24px"><span class="n">13:29:24</span></div>
<div class="d" style="left:1286px;width:79px;height:24px;line-height:24px"><span class="n">0</span></div>
<div class="d" style="left:1366px;width:79px;height:24px;line-height:24px"><span class="n">1</span></div>
<div class="d org" style="left:1446px;width:464px;height:24px;line-height:24px"><span class="c">福建自贸</span><span class="n">/</span><span class="c">海西概念</span><span class="n">, </span><span class="c">大消费</span></div>
</div>
<div class="r" style="top:562px;height:23px">
<div class="d" style="left:0px;width:138px;height:23px;line-height:23px"><span class="n">000639</span></div>
<div class="d" style="left:139px;width:156px;height:23px;line-height:23px"><span class="c">西王食品</span></div>
<div class="d" style="left:296px;width:118px;height:23px;line-height:23px"><span class="n">3.62</span></div>
<div class="d red" style="left:415px;width:117px;height:23px;line-height:23px"><span class="n">10.03</span></div>
<div class="d" style="left:533px;width:136px;height:23px;line-height:23px"><span class="n">2.80%</span></div>
<div class="d" style="left:670px;width:136px;height:23px;line-height:23px"><span class="n">9.51%</span></div>
<div class="d" style="left:807px;width:163px;height:23px;line-height:23px"><span class="n">39.08</span><span class="c">亿</span></div>
<div class="d" style="left:971px;width:157px;height:23px;line-height:23px"><span class="n">10:36:33</span></div>
<div class="d" style="left:1129px;width:156px;height:23px;line-height:23px"><span class="n">10:36:33</span></div>
<div class="d" style="left:1286px;width:79px;height:23px;line-height:23px"><span class="n">0</span></div>
<div class="d" style="left:1366px;width:79px;height:23px;line-height:23px"><span class="n">1</span></div>
<div class="d org" style="left:1446px;width:464px;height:23px;line-height:23px"><span class="c">大消费</span></div>
</div>
<div class="r" style="top:586px;height:23px">
<div class="d" style="left:0px;width:138px;height:23px;line-height:23px"><span class="n">603679</span></div>
<div class="d" style="left:139px;width:156px;height:23px;line-height:23px"><span class="c">华体科技</span></div>
<div class="d" style="left:296px;width:118px;height:23px;line-height:23px"><span class="n">19.31</span></div>
<div class="d red" style="left:415px;width:117px;height:23px;line-height:23px"><span class="n">10.03</span></div>
<div class="d" style="left:533px;width:136px;height:23px;line-height:23px"><span class="n">4.53%</span></div>
<div class="d" style="left:670px;width:136px;height:23px;line-height:23px"><span class="n">6.29%</span></div>
<div class="d" style="left:807px;width:163px;height:23px;line-height:23px"><span class="n">31.82</span><span class="c">亿</span></div>
<div class="d" style="left:971px;width:157px;height:23px;line-height:23px"><span class="n">09:25:00</span></div>
<div class="d" style="left:1129px;width:156px;height:23px;line-height:23px"><span class="n">09:25:00</span></div>
<div class="d" style="left:1286px;width:79px;height:23px;line-height:23px"><span class="n">0</span></div>
<div class="d" style="left:1366px;width:79px;height:23px;line-height:23px"><span class="n">2</span></div>
<div class="d org" style="left:1446px;width:464px;height:23px;line-height:23px"><span class="c">航天</span></div>
</div>
<div class="r" style="top:610px;height:23px">
<div class="d" style="left:0px;width:138px;height:23px;line-height:23px"><span class="n">002748</span></div>
<div class="d" style="left:139px;width:156px;height:23px;line-height:23px"><span class="c">世龙实业</span></div>
<div class="d" style="left:296px;width:118px;height:23px;line-height:23px"><span class="n">13.05</span></div>
<div class="d red" style="left:415px;width:117px;height:23px;line-height:23px"><span class="n">10.03</span></div>
<div class="d" style="left:533px;width:136px;height:23px;line-height:23px"><span class="n">2.70%</span></div>
<div class="d" style="left:670px;width:136px;height:23px;line-height:23px"><span class="n">12.62%</span></div>
<div class="d" style="left:807px;width:163px;height:23px;line-height:23px"><span class="n">31.32</span><span class="c">亿</span></div>
<div class="d" style="left:971px;width:157px;height:23px;line-height:23px"><span class="n">14:01:51</span></div>
<div class="d" style="left:1129px;width:156px;height:23px;line-height:23px"><span class="n">14:01:51</span></div>
<div class="d" style="left:1286px;width:79px;height:23px;line-height:23px"><span class="n">0</span></div>
<div class="d" style="left:1366px;width:79px;height:23px;line-height:23px"><span class="n">1</span></div>
<div class="d org" style="left:1446px;width:464px;height:23px;line-height:23px"><span class="c">锂电池</span></div>
</div>
<div class="r" style="top:634px;height:23px">
<div class="d" style="left:0px;width:138px;height:23px;line-height:23px"><span class="n">000523</span></div>
<div class="d" style="left:139px;width:156px;height:23px;line-height:23px"><span class="c">红棉股份</span></div>
<div class="d" style="left:296px;width:118px;height:23px;line-height:23px"><span class="n">3.73</span></div>
<div class="d red" style="left:415px;width:117px;height:23px;line-height:23px"><span class="n">10.03</span></div>
<div class="d" style="left:533px;width:136px;height:23px;line-height:23px"><span class="n">1.17%</span></div>
<div class="d" style="left:670px;width:136px;height:23px;line-height:23px"><span class="n">6.63%</span></div>
<div class="d" style="left:807px;width:163px;height:23px;line-height:23px"><span class="n">49.43</span><span class="c">亿</span></div>
<div class="d" style="left:971px;width:157px;height:23px;line-height:23px"><span class="n">10:01:18</span></div>
<div class="d" style="left:1129px;width:156px;height:23px;line-height:23px"><span class="n">10:03:48</span></div>
<div class="d" style="left:1286px;width:79px;height:23px;line-height:23px"><span class="n">1</span></div>
<div class="d" style="left:1366px;width:79px;height:23px;line-height:23px"><span class="n">1</span></div>
<div class="d org" style="left:1446px;width:464px;height:23px;line-height:23px"><span class="c">大消费</span></div>
</div>
<div class="r" style="top:658px;height:23px">
<div class="d" style="left:0px;width:138px;height:23px;line-height:23px"><span class="n">000566</span></div>
<div class="d" style="left:139px;width:156px;height:23px;line-height:23px"><span class="c">海南海药</span></div>
<div class="d" style="left:296px;width:118px;height:23px;line-height:23px"><span class="n">7.24</span></div>
<div class="d red" style="left:415px;width:117px;height:23px;line-height:23px"><span class="n">10.03</span></div>
<div class="d" style="left:533px;width:136px;height:23px;line-height:23px"><span class="n">1.36%</span></div>
<div class="d" style="left:670px;width:136px;height:23px;line-height:23px"><span class="n">11.37%</span></div>
<div class="d" style="left:807px;width:163px;height:23px;line-height:23px"><span class="n">84.41</span><span class="c">亿</span></div>
<div class="d" style="left:971px;width:157px;height:23px;line-height:23px"><span class="n">14:14:36</span></div>
<div class="d" style="left:1129px;width:156px;height:23px;line-height:23px"><span class="n">14:14:36</span></div>
<div class="d" style="left:1286px;width:79px;height:23px;line-height:23px"><span class="n">0</span></div>
<div class="d" style="left:1366px;width:79px;height:23px;line-height:23px"><span class="n">1</span></div>
<div class="d org" style="left:1446px;width:464px;height:23px;line-height:23px"><span class="c">医药</span><span class="n">, </span><span class="c">海南自由贸易港</span></div>
</div>
<div class="r" style="top:682px;height:24px">
<div class="d" style="left:0px;width:138px;height:24px;line-height:24px"><span class="n">000036</span></div>
<div class="d" style="left:139px;width:156px;height:24px;line-height:24px"><span class="c">华联控股</span></div>
<div class="d" style="left:296px;width:118px;height:24px;line-height:24px"><span class="n">5.49</span></div>
<div class="d red" style="left:415px;width:117px;height:24px;line-height:24px"><span class="n">10.02</span></div>
<div class="d" style="left:533px;width:136px;height:24px;line-height:24px"><span class="n">0.46%</span></div>
<div class="d" style="left:670px;width:136px;height:24px;line-height:24px"><span class="n">9.28%</span></div>
<div class="d" style="left:807px;width:163px;height:24px;line-height:24px"><span class="n">76.92</span><span class="c">亿</span></div>
<div class="d" style="left:971px;width:157px;height:24px;line-height:24px"><span class="n">10:00:57</span></div>
<div class="d" style="left:1129px;width:156px;height:24px;line-height:24px"><span class="n">14:09:24</span></div>
<div class="d" style="left:1286px;width:79px;height:24px;line-height:24px"><span class="n">2</span></div>
<div class="d" style="left:1366px;width:79px;height:24px;line-height:24px"><span class="n">1</span></div>
<div class="d org" style="left:1446px;width:464px;height:24px;line-height:24px"><span class="c">房地产</span></div>
</div>
<div class="r" style="top:707px;height:23px">
<div class="d" style="left:0px;width:138px;height:23px;line-height:23px"><span class="n">002735</span></div>
<div class="d" style="left:139px;width:156px;height:23px;line-height:23px"><span class="c">王子新材</span></div>
<div class="d" style="left:296px;width:118px;height:23px;line-height:23px"><span class="n">17.79</span></div>
<div class="d red" style="left:415px;width:117px;height:23px;line-height:23px"><span class="n">10.02</span></div>
<div class="d" style="left:533px;width:136px;height:23px;line-height:23px"><span class="n">5.20%</span></div>
<div class="d" style="left:670px;width:136px;height:23px;line-height:23px"><span class="n">6.20%</span></div>
<div class="d" style="left:807px;width:163px;height:23px;line-height:23px"><span class="n">49.89</span><span class="c">亿</span></div>
<div class="d" style="left:971px;width:157px;height:23px;line-height:23px"><span class="n">09:25:00</span></div>
<div class="d" style="left:1129px;width:156px;height:23px;line-height:23px"><span class="n">09:25:00</span></div>
<div class="d" style="left:1286px;width:79px;height:23px;line-height:23px"><span class="n">0</span></div>
<div class="d" style="left:1366px;width:79px;height:23px;line-height:23px"><span class="n">1</span></div>
<div class="d org" style="left:1446px;width:464px;height:23px;line-height:23px"><span class="c">核聚变</span></div>
</div>
<div class="r" style="top:731px;height:23px">
<div class="d" style="left:0px;width:138px;height:23px;line-height:23px"><span class="n">600468</span></div>
<div class="d" style="left:139px;width:156px;height:23px;line-height:23px"><span class="c">百利电气</span></div>
<div class="d" style="left:296px;width:118px;height:23px;line-height:23px"><span class="n">7.14</span></div>
<div class="d red" style="left:415px;width:117px;height:23px;line-height:23px"><span class="n">10.02</span></div>
<div class="d" style="left:533px;width:136px;height:23px;line-height:23px"><span class="n">1.05%</span></div>
<div class="d" style="left:670px;width:136px;height:23px;line-height:23px"><span class="n">6.14%</span></div>
<div class="d" style="left:807px;width:163px;height:23px;line-height:23px"><span class="n">77.66</span><span class="c">亿</span></div>
<div class="d" style="left:971px;width:157px;height:23px;line-height:23px"><span class="n">09:36:39</span></div>
<div class="d" style="left:1129px;width:156px;height:23px;line-height:23px"><span class="n">09:36:39</span></div>
<div class="d" style="left:1286px;width:79px;height:23px;line-height:23px"><span class="n">0</span></div>
<div class="d" style="left:1366px;width:79px;height:23px;line-height:23px"><span class="n">1</span></div>
<div class="d org" style="left:1446px;width:464px;height:23px;line-height:23px"><span class="c">核聚变</span></div>
</div>
<div class="r" style="top:755px;height:23px">
<div class="d" style="left:0px;width:138px;height:23px;line-height:23px"><span class="n">603626</span></div>
<div class="d" style="left:139px;width:156px;height:23px;line-height:23px"><span class="c">科森科技</span></div>
<div class="d" style="left:296px;width:118px;height:23px;line-height:23px"><span class="n">15.15</span></div>
<div class="d red" style="left:415px;width:117px;height:23px;line-height:23px"><span class="n">10.02</span></div>
<div class="d" style="left:533px;width:136px;height:23px;line-height:23px"><span class="n">0.80%</span></div>
<div class="d" style="left:670px;width:136px;height:23px;line-height:23px"><span class="n">16.56%</span></div>
<div class="d" style="left:807px;width:163px;height:23px;line-height:23px"><span class="n">84.06</span><span class="c">亿</span></div>
<div class="d" style="left:971px;width:157px;height:23px;line-height:23px"><span class="n">13:02:00</span></div>
<div class="d" style="left:1129px;width:156px;height:23px;line-height:23px"><span class="n">13:24:54</span></div>
<div class="d" style="left:1286px;width:79px;height:23px;line-height:23px"><span class="n">2</span></div>
<div class="d" style="left:1366px;width:79px;height:23px;line-height:23px"><span class="n">1</span></div>
<div class="d org" style="left:1446px;width:464px;height:23px;line-height:23px"><span class="c">其他</span></div>
</div>
<div class="r" style="top:779px;height:23px">
<div class="d" style="left:0px;width:138px;height:23px;line-height:23px"><span class="n">603585</span></div>
<div class="d" style="left:139px;width:156px;height:23px;line-height:23px"><span class="c">苏利股份</span></div>
<div class="d" style="left:296px;width:118px;height:23px;line-height:23px"><span class="n">22.40</span></div>
<div class="d red" style="left:415px;width:117px;height:23px;line-height:23px"><span class="n">10.02</span></div>
<div class="d" style="left:533px;width:136px;height:23px;line-height:23px"><span class="n">0.30%</span></div>
<div class="d" style="left:670px;width:136px;height:23px;line-height:23px"><span class="n">15.31%</span></div>
<div class="d" style="left:807px;width:163px;height:23px;line-height:23px"><span class="n">40.93</span><span class="c">亿</span></div>
<div class="d" style="left:971px;width:157px;height:23px;line-height:23px"><span class="n">10:19:19</span></div>
<div class="d" style="left:1129px;width:156px;height:23px;line-height:23px"><span class="n">14:16:38</span></div>
<div class="d" style="left:1286px;width:79px;height:23px;line-height:23px"><span class="n">17</span></div>
<div class="d" style="left:1366px;width:79px;height:23px;line-height:23px"><span class="n">3</span></div>
<div class="d org" style="left:1446px;width:464px;height:23px;line-height:23px"><span class="c">其他</span></div>
</div>
<div class="r" style="top:803px;height:23px">
<div class="d" style="left:0px;width:138px;height:23px;line-height:23px"><span class="n">600990</span></div>
<div class="d" style="left:139px;width:156px;height:23px;line-height:23px"><span class="c">四创电子</span></div>
<div class="d" style="left:296px;width:118px;height:23px;line-height:23px"><span class="n">31.19</span></div>
<div class="d red" style="left:415px;width:117px;height:23px;line-height:23px"><span class="n">10.02</span></div>
<div class="d" style="left:533px;width:136px;height:23px;line-height:23px"><span class="n">0.73%</span></div>
<div class="d" style="left:670px;width:136px;height:23px;line-height:23px"><span class="n">6.87%</span></div>
<div class="d" style="left:807px;width:163px;height:23px;line-height:23px"><span class="n">83.91</span><span class="c">亿</span></div>
<div class="d" style="left:971px;width:157px;height:23px;line-height:23px"><span class="n">09:48:28</span></div>
<div class="d" style="left:1129px;width:156px;height:23px;line-height:23px"><span class="n">09:49:07</span></div>
<div class="d" style="left:1286px;width:79px;height:23px;line-height:23px"><span class="n">1</span></div>
<div class="d" style="left:1366px;width:79px;height:23px;line-height:23px"><span class="n">1</span></div>
<div class="d org" style="left:1446px;width:464px;height:23px;line-height:23px"><span class="c">核聚变</span><span class="n">, </span><span class="c">航天</span></div>
</div>
<div class="r" style="top:827px;height:24px">
<div class="d" style="left:0px;width:138px;height:24px;line-height:24px"><span class="n">600367</span></div>
<div class="d" style="left:139px;width:156px;height:24px;line-height:24px"><span class="c">红星发展</span></div>
<div class="d" style="left:296px;width:118px;height:24px;line-height:24px"><span class="n">17.13</span></div>
<div class="d red" style="left:415px;width:117px;height:24px;line-height:24px"><span class="n">10.02</span></div>
<div class="d" style="left:533px;width:136px;height:24px;line-height:24px"><span class="n">1.34%</span></div>
<div class="d" style="left:670px;width:136px;height:24px;line-height:24px"><span class="n">8.48%</span></div>
<div class="d" style="left:807px;width:163px;height:24px;line-height:24px"><span class="n">55.15</span><span class="c">亿</span></div>
<div class="d" style="left:971px;width:157px;height:24px;line-height:24px"><span class="n">09:40:59</span></div>
<div class="d" style="left:1129px;width:156px;height:24px;line-height:24px"><span class="n">09:40:59</span></div>
<div class="d" style="left:1286px;width:79px;height:24px;line-height:24px"><span class="n">0</span></div>
<div class="d" style="left:1366px;width:79px;height:24px;line-height:24px"><span class="n">1</span></div>
<div class="d org" style="left:1446px;width:464px;height:24px;line-height:24px"><span class="c">锂电池</span></div>
</div>
<div class="r" style="top:852px;height:23px">
<div class="d" style="left:0px;width:138px;height:23px;line-height:23px"><span class="n">001331</span></div>
<div class="d" style="left:139px;width:156px;height:23px;line-height:23px"><span class="c">胜通能源</span></div>
<div class="d" style="left:296px;width:118px;height:23px;line-height:23px"><span class="n">26.14</span></div>
<div class="d red" style="left:415px;width:117px;height:23px;line-height:23px"><span class="n">10.02</span></div>
<div class="d" style="left:533px;width:136px;height:23px;line-height:23px"><span class="n">10.79%</span></div>
<div class="d" style="left:670px;width:136px;height:23px;line-height:23px"><span class="n">0.56%</span></div>
<div class="d" style="left:807px;width:163px;height:23px;line-height:23px"><span class="n">51.53</span><span class="c">亿</span></div>
<div class="d" style="left:971px;width:157px;height:23px;line-height:23px"><span class="n">09:25:00</span></div>
<div class="d" style="left:1129px;width:156px;height:23px;line-height:23px"><span class="n">09:25:00</span></div>
<div class="d" style="left:1286px;width:79px;height:23px;line-height:23px"><span class="n">0</span></div>
<div class="d" style="left:1366px;width:79px;height:23px;line-height:23px"><span class="n">6</span></div>
<div class="d org" style="left:1446px;width:464px;height:23px;line-height:23px"><span class="c">股权转让</span></div>
</div>
<div class="r" style="top:876px;height:23px">
<div class="d" style="left:0px;width:138px;height:23px;line-height:23px"><span class="n">600838</span></div>
<div class="d" style="left:139px;width:156px;height:23px;line-height:23px"><span class="c">上海九百</span></div>
<div class="d" style="left:296px;width:118px;height:23px;line-height:23px"><span class="n">11.09</span></div>
<div class="d red" style="left:415px;width:117px;height:23px;line-height:23px"><span class="n">10.02</span></div>
<div class="d" style="left:533px;width:136px;height:23px;line-height:23px"><span class="n">1.93%</span></div>
<div class="d" style="left:670px;width:136px;height:23px;line-height:23px"><span class="n">18.01%</span></div>
<div class="d" style="left:807px;width:163px;height:23px;line-height:23px"><span class="n">44.46</span><span class="c">亿</span></div>
<div class="d" style="left:971px;width:157px;height:23px;line-height:23px"><span class="n">09:34:22</span></div>
<div class="d" style="left:1129px;width:156px;height:23px;line-height:23px"><span class="n">09:57:16</span></div>
<div class="d" style="left:1286px;width:79px;height:23px;line-height:23px"><span class="n">4</span></div>
<div class="d" style="left:1366px;width:79px;height:23px;line-height:23px"><span class="n">2</span></div>
<div class="d org" style="left:1446px;width:464px;height:23px;line-height:23px"><span class="c">大消费</span></div>
</div>
<div class="r" style="top:900px;height:23px">
<div class="d" style="left:0px;width:138px;height:23px;line-height:23px"><span class="n">002188</span></div>
<div class="d" style="left:139px;width:156px;height:23px;line-height:23px"><span class="c">中天服务</span></div>
<div class="d" style="left:296px;width:118px;height:23px;line-height:23px"><span class="n">7.47</span></div>
<div class="d red" style="left:415px;width:117px;height:23px;line-height:23px"><span class="n">10.01</span></div>
<div class="d" style="left:533px;width:136px;height:23px;line-height:23px"><span class="n">2.37%</span></div>
<div class="d" style="left:670px;width:136px;height:23px;line-height:23px"><span class="n">15.88%</span></div>
<div class="d" style="left:807px;width:163px;height:23px;line-height:23px"><span class="n">19.23</span><span class="c">亿</span></div>
<div class="d" style="left:971px;width:157px;height:23px;line-height:23px"><span class="n">09:30:09</span></div>
<div class="d" style="left:1129px;width:156px;height:23px;line-height:23px"><span class="n">09:40:45</span></div>
<div class="d" style="left:1286px;width:79px;height:23px;line-height:23px"><span class="n">1</span></div>
<div class="d" style="left:1366px;width:79px;height:23px;line-height:23px"><span class="n">3</span></div>
<div class="d org" style="left:1446px;width:464px;height:23px;line-height:23px"><span class="c">房地产</span></div>
</div>
</div></body></html>
